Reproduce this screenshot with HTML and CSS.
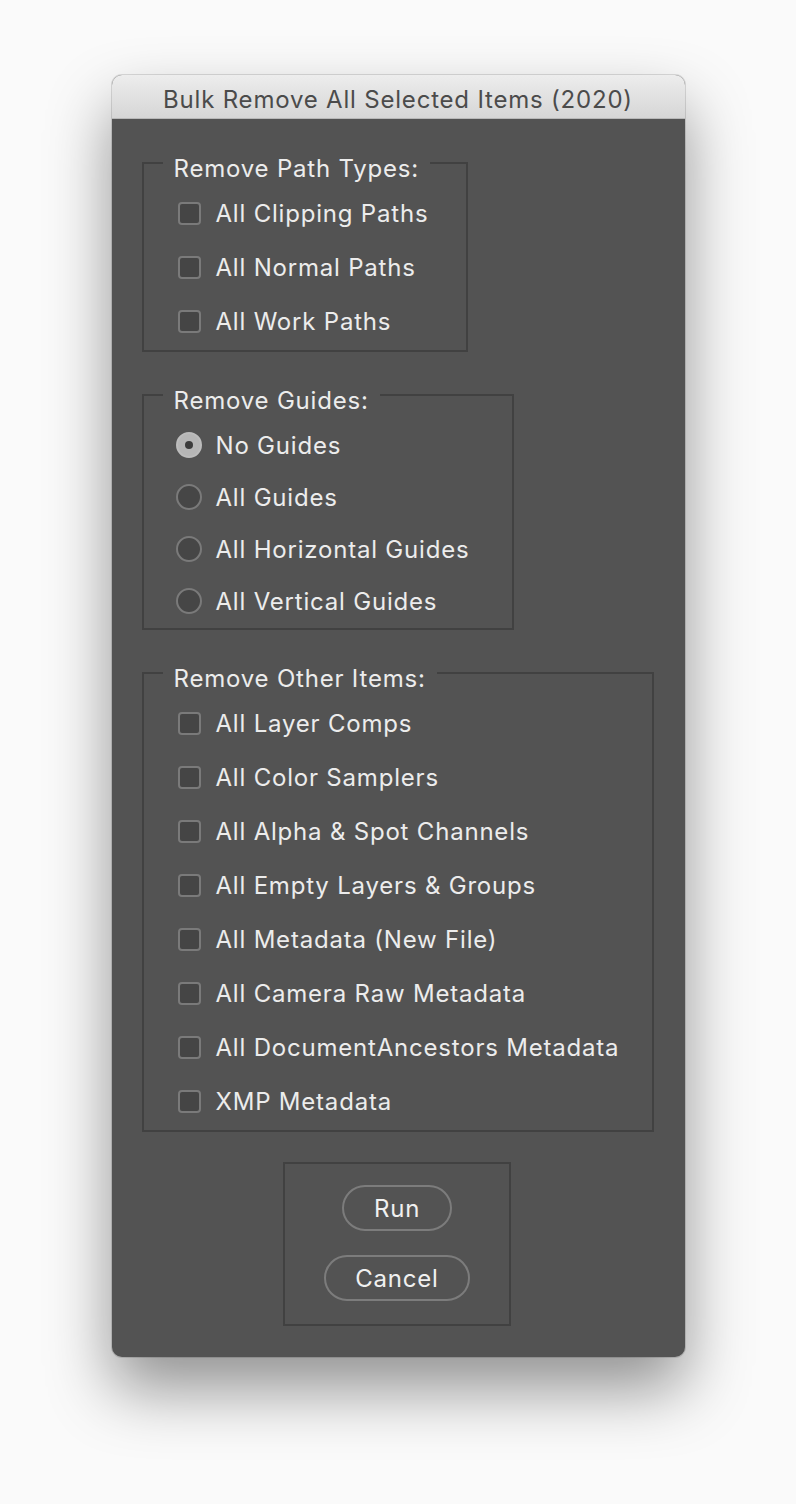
FILE: index.html
```html
<!DOCTYPE html>
<html>
<head>
<meta charset="utf-8">
<title>Bulk Remove All Selected Items (2020)</title>
<link rel="stylesheet" href="styles.css">
</head>
<body>
<div class="window">
  <div class="titlebar">Bulk Remove All Selected Items (2020)</div>
  <div class="content">
    <fieldset class="group g-paths">
      <legend>Remove Path Types:</legend>
      <ul class="options">
        <li class="opt"><span class="check"></span><span class="label">All Clipping Paths</span></li>
        <li class="opt"><span class="check"></span><span class="label">All Normal Paths</span></li>
        <li class="opt"><span class="check"></span><span class="label">All Work Paths</span></li>
      </ul>
    </fieldset>
    <fieldset class="group g-guides">
      <legend>Remove Guides:</legend>
      <ul class="options radios">
        <li class="opt"><span class="radio on"></span><span class="label">No Guides</span></li>
        <li class="opt"><span class="radio"></span><span class="label">All Guides</span></li>
        <li class="opt"><span class="radio"></span><span class="label">All Horizontal Guides</span></li>
        <li class="opt"><span class="radio"></span><span class="label">All Vertical Guides</span></li>
      </ul>
    </fieldset>
    <fieldset class="group g-other">
      <legend>Remove Other Items:</legend>
      <ul class="options">
        <li class="opt"><span class="check"></span><span class="label">All Layer Comps</span></li>
        <li class="opt"><span class="check"></span><span class="label">All Color Samplers</span></li>
        <li class="opt"><span class="check"></span><span class="label">All Alpha &amp; Spot Channels</span></li>
        <li class="opt"><span class="check"></span><span class="label">All Empty Layers &amp; Groups</span></li>
        <li class="opt"><span class="check"></span><span class="label">All Metadata (New File)</span></li>
        <li class="opt"><span class="check"></span><span class="label">All Camera Raw Metadata</span></li>
        <li class="opt"><span class="check"></span><span class="label">All DocumentAncestors Metadata</span></li>
        <li class="opt"><span class="check"></span><span class="label">XMP Metadata</span></li>
      </ul>
    </fieldset>
    <div class="buttons">
      <button class="btn btn-run">Run</button>
      <button class="btn btn-cancel">Cancel</button>
    </div>
  </div>
</div>
</body>
</html>
```

FILE: styles.css
```css
html, body {
  margin: 0;
  padding: 0;
}
body {
  background: #fafafa;
  font-family: Inter, "Noto Sans", "Liberation Sans", sans-serif;
  height: 1504px;
  overflow: hidden;
}
.window {
  width: 573px;
  margin: 75px auto 0;
  border-radius: 10px;
  overflow: hidden;
  background: #535353;
  box-shadow: 0 32px 64px rgba(0, 0, 0, 0.42), 0 0 0 1px rgba(0, 0, 0, 0.12);
}
.titlebar {
  height: 44px;
  box-sizing: border-box;
  border-bottom: 1px solid #b8b8b8;
  background: linear-gradient(#ededed, #d6d6d6);
  color: #4b4b4b;
  font-size: 24px;
  letter-spacing: 0.8px;
  line-height: 49px;
  text-align: center;
}
.content {
  padding: 24px 32px 31px 30px;
  display: flex;
  flex-direction: column;
  align-items: flex-start;
  gap: 23px;
}
.group {
  margin: 0;
  padding: 0 0 2px;
  border: 2px solid #414141;
  box-sizing: border-box;
  min-width: 0;
}
.g-paths { width: 326px; }
.g-guides { width: 372px; padding-bottom: 1px; }
.g-other { width: 512px; }
legend {
  margin-left: 19px;
  padding: 12px 11px 0;
  font-size: 24px;
  letter-spacing: 0.8px;
  line-height: 28px;
  color: #ececec;
}
.options {
  list-style: none;
  margin: 0;
  padding: 3px 0 0 34px;
}
.radios {
  padding-top: 4px;
  padding-bottom: 0;
}
.opt {
  height: 54px;
  display: flex;
  align-items: center;
}
.radios .opt {
  height: 52px;
}
.label {
  font-size: 24px;
  letter-spacing: 0.8px;
  color: #ececec;
  margin-left: 15px;
}
.check {
  width: 23px;
  height: 23px;
  box-sizing: border-box;
  border: 2px solid #7a7a7a;
  border-radius: 4px;
  background: #454545;
  flex: none;
}
.radio {
  width: 26px;
  height: 26px;
  margin-left: -2px;
  box-sizing: border-box;
  border: 2px solid #7a7a7a;
  border-radius: 50%;
  background: #464646;
  flex: none;
  display: flex;
  align-items: center;
  justify-content: center;
}
.radios .label {
  margin-left: 14px;
}
.radio.on {
  background: #b6b6b6;
  border-color: #bcbcbc;
}
.radio.on::after {
  content: "";
  width: 8px;
  height: 8px;
  border-radius: 50%;
  background: #3c3c3c;
}
.buttons {
  align-self: center;
  margin-top: 7px;
  width: 228px;
  box-sizing: border-box;
  border: 2px solid #414141;
  padding: 21px 0 23px;
  display: flex;
  flex-direction: column;
  align-items: center;
  gap: 24px;
}
.btn {
  height: 46px;
  box-sizing: border-box;
  border: 2px solid #7c7c7c;
  border-radius: 23px;
  background: transparent;
  color: #f0f0f0;
  font-family: inherit;
  font-size: 24px;
  letter-spacing: 0.8px;
  padding: 0;
}
.btn-run { width: 110px; }
.btn-cancel { width: 146px; }
```
